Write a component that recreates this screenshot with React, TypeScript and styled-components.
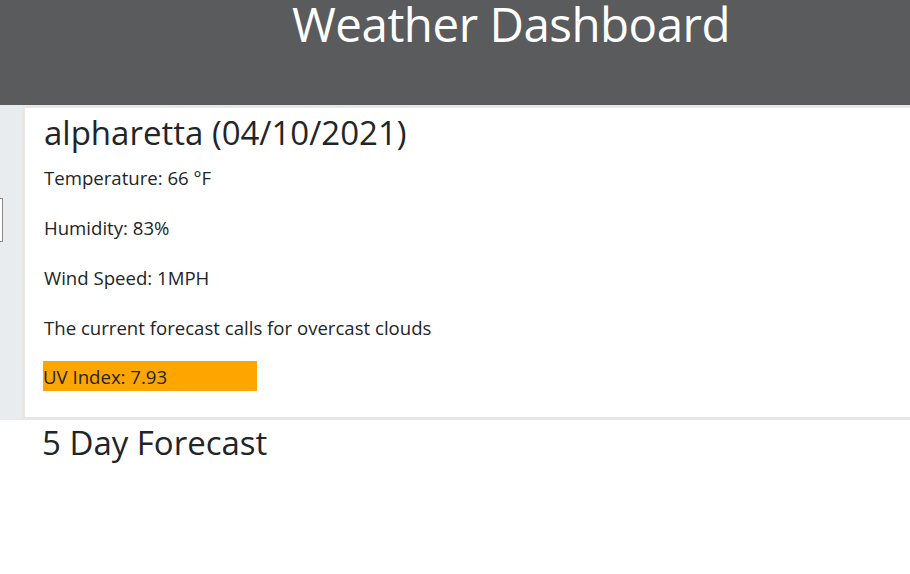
import { createGlobalStyle, styled } from 'styled-components';

const GlobalStyle = createGlobalStyle`
  html, body {
    margin: 0;
    padding: 0;
    background: #ffffff;
    overflow: hidden;
  }

  body {
    font-family: 'Open Sans', 'Noto Sans', sans-serif;
    color: #212529;
  }
`;

const Page = styled.div`
  width: 910px;
  height: 574px;
  overflow: hidden;
`;

const Header = styled.header`
  height: 105px;
  background-color: #5a5b5c;
  padding-left: 292px;
  box-sizing: border-box;

  h1 {
    margin: 0;
    font-size: 47.5px;
    font-weight: 400;
    line-height: 48px;
    color: #ffffff;
    letter-spacing: -0.5px;
  }
`;

const Main = styled.div`
  display: flex;
  margin-right: -20px;
`;

const Sidebar = styled.aside`
  width: 22px;
  flex-shrink: 0;
  background-color: #e9ecef;
  overflow: hidden;
  padding-top: 93px;
  box-sizing: border-box;
`;

const SearchInput = styled.input`
  display: block;
  width: 200px;
  height: 44px;
  margin-left: -197px;
  box-sizing: border-box;
  border: 1px solid #8a8a8a;
  background: #ffffff;
`;

const Card = styled.section`
  flex: 1;
  background: #ffffff;
  border: 3px solid #ebe6e6;
  padding: 5px 19px 26px;
`;

const CityTitle = styled.h2`
  margin: 0 0 13px;
  font-size: 33px;
  font-weight: 400;
  line-height: 40px;
`;

const Stat = styled.p`
  margin: 0 0 26px;
  font-size: 18.6px;
  line-height: 24px;
`;

const UvBadge = styled.p<{ $color: string }>`
  margin: -5px 0 0 -1px;
  width: 214px;
  height: 30px;
  padding-top: 4px;
  box-sizing: border-box;
  background-color: ${(props) => props.$color};
  font-size: 18.6px;
  line-height: 24px;
`;

const SectionTitle = styled.h3`
  margin: 3px 0 0 42px;
  font-size: 33px;
  font-weight: 400;
  line-height: 40px;
`;

const weather = {
  city: 'alpharetta',
  date: '04/10/2021',
  temp: 66,
  humidity: 83,
  wind: 1,
  description: 'overcast clouds',
  uv: 7.93,
};

function uvColor(uv: number) {
  if (uv < 3) return '#28a745';
  if (uv < 6) return '#ffc107';
  if (uv < 8) return '#ffa500';
  return '#dc3545';
}

export default function App() {
  return (
    <>
      <GlobalStyle />
      <Page>
        <Header>
          <h1>Weather Dashboard</h1>
        </Header>

        <Main>
          <Sidebar>
            <SearchInput type="text" aria-label="Search city" />
          </Sidebar>

          <Card>
            <CityTitle>
              {weather.city} ({weather.date})
            </CityTitle>
            <Stat>Temperature: {weather.temp} °F</Stat>
            <Stat>Humidity: {weather.humidity}%</Stat>
            <Stat>Wind Speed: {weather.wind}MPH</Stat>
            <Stat>The current forecast calls for {weather.description}</Stat>
            <UvBadge $color={uvColor(weather.uv)}>UV Index: {weather.uv}</UvBadge>
          </Card>
        </Main>

        <SectionTitle>5 Day Forecast</SectionTitle>
      </Page>
    </>
  );
}
